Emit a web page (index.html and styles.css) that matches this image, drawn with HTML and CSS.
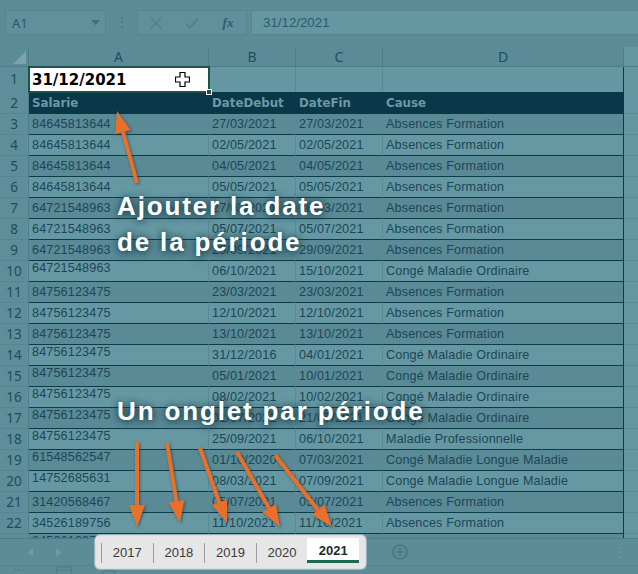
FILE: index.html
```html
<!DOCTYPE html>
<html lang="fr">
<head>
<meta charset="utf-8">
<title>Excel</title>
<link rel="stylesheet" href="styles.css">
</head>
<body>
<div class="app">
  <div class="toolbar">
    <div class="namebox"><span>A1</span><svg class="caret" width="9" height="5" viewBox="0 0 9 5"><path d="M0 0H9L4.5 5Z"/></svg></div>
    <div class="grip">⋮</div>
    <div class="fbtns">
      <span class="fb"><svg width="12" height="12" viewBox="0 0 12 12"><path d="M1 1L11 11M11 1L1 11"/></svg></span>
      <span class="fb"><svg width="14" height="12" viewBox="0 0 14 12"><path d="M1 6.5L5 10.5L13 1.5"/></svg></span>
      <span class="fb fx">fx</span>
    </div>
    <div class="formula">31/12/2021</div>
  </div>

  <div class="sheet">
    <div class="row colhdr">
      <div class="corner"><svg width="13" height="13" viewBox="0 0 13 13"><path d="M13 0V13H0Z"/></svg></div>
      <div>A</div><div>B</div><div>C</div><div>D</div><div class="e"></div>
    </div>
    <div class="row r1">
      <div class="rh">1</div>
      <div class="a1"><span>31/12/2021</span><svg class="cursor" width="15" height="15" viewBox="0 0 15 15"><path d="M5 .5H10V5H14.5V10H10V14.5H5V10H.5V5H5Z"/></svg><i class="handle"></i></div>
      <div class="c"></div><div class="c"></div><div class="c last"></div><div class="e"></div>
    </div>
    <div class="row thead">
      <div class="rh">2</div>
      <div>Salarie</div><div>DateDebut</div><div>DateFin</div><div>Cause</div><div class="e"></div>
    </div>
    <div class="row d dk"><div class="rh">3</div><div>84645813644</div><div>27/03/2021</div><div>27/03/2021</div><div>Absences Formation</div><div class="e"></div></div>
    <div class="row d"><div class="rh">4</div><div>84645813644</div><div>02/05/2021</div><div>02/05/2021</div><div>Absences Formation</div><div class="e"></div></div>
    <div class="row d dk"><div class="rh">5</div><div>84645813644</div><div>04/05/2021</div><div>04/05/2021</div><div>Absences Formation</div><div class="e"></div></div>
    <div class="row d"><div class="rh">6</div><div>84645813644</div><div>05/05/2021</div><div>05/05/2021</div><div>Absences Formation</div><div class="e"></div></div>
    <div class="row d dk"><div class="rh">7</div><div>64721548963</div><div>27/03/2021</div><div>28/03/2021</div><div>Absences Formation</div><div class="e"></div></div>
    <div class="row d"><div class="rh">8</div><div>64721548963</div><div>05/07/2021</div><div>05/07/2021</div><div>Absences Formation</div><div class="e"></div></div>
    <div class="row d dk"><div class="rh">9</div><div>64721548963</div><div>29/09/2021</div><div>29/09/2021</div><div>Absences Formation</div><div class="e"></div></div>
    <div class="row d hi"><div class="rh">10</div><div>64721548963</div><div>06/10/2021</div><div>15/10/2021</div><div>Congé Maladie Ordinaire</div><div class="e"></div></div>
    <div class="row d dk"><div class="rh">11</div><div>84756123475</div><div>23/03/2021</div><div>23/03/2021</div><div>Absences Formation</div><div class="e"></div></div>
    <div class="row d"><div class="rh">12</div><div>84756123475</div><div>12/10/2021</div><div>12/10/2021</div><div>Absences Formation</div><div class="e"></div></div>
    <div class="row d dk"><div class="rh">13</div><div>84756123475</div><div>13/10/2021</div><div>13/10/2021</div><div>Absences Formation</div><div class="e"></div></div>
    <div class="row d hi"><div class="rh">14</div><div>84756123475</div><div>31/12/2016</div><div>04/01/2021</div><div>Congé Maladie Ordinaire</div><div class="e"></div></div>
    <div class="row d dk hi"><div class="rh">15</div><div>84756123475</div><div>05/01/2021</div><div>10/01/2021</div><div>Congé Maladie Ordinaire</div><div class="e"></div></div>
    <div class="row d hi"><div class="rh">16</div><div>84756123475</div><div>08/02/2021</div><div>10/02/2021</div><div>Congé Maladie Ordinaire</div><div class="e"></div></div>
    <div class="row d dk hi"><div class="rh">17</div><div>84756123475</div><div>01/07/2021</div><div>21/07/2021</div><div>Congé Maladie Ordinaire</div><div class="e"></div></div>
    <div class="row d hi"><div class="rh">18</div><div>84756123475</div><div>25/09/2021</div><div>06/10/2021</div><div>Maladie Professionnelle</div><div class="e"></div></div>
    <div class="row d dk hi"><div class="rh">19</div><div>61548562547</div><div>01/10/2020</div><div>07/03/2021</div><div>Congé Maladie Longue Maladie</div><div class="e"></div></div>
    <div class="row d hi"><div class="rh">20</div><div>14752685631</div><div>08/03/2021</div><div>07/09/2021</div><div>Congé Maladie Longue Maladie</div><div class="e"></div></div>
    <div class="row d dk"><div class="rh">21</div><div>31420568467</div><div>05/07/2021</div><div>05/07/2021</div><div>Absences Formation</div><div class="e"></div></div>
    <div class="row d"><div class="rh">22</div><div>34526189756</div><div>11/10/2021</div><div>11/10/2021</div><div>Absences Formation</div><div class="e"></div></div>
    <div class="row d dk hi"><div class="rh">23</div><div>34526189756</div><div>12/10/2021</div><div>12/10/2021</div><div>Absences Formation</div><div class="e"></div></div>
  </div>

  <div class="tabbar">
    <div class="nav">
      <svg width="6" height="9" viewBox="0 0 6 9"><path d="M6 0V9L0 4.5Z"/></svg>
      <svg width="6" height="9" viewBox="0 0 6 9"><path d="M0 0V9L6 4.5Z"/></svg>
    </div>
    <div class="tabs">
      <div class="tab">2017</div>
      <div class="tab">2018</div>
      <div class="tab">2019</div>
      <div class="tab">2020</div>
      <div class="tab active">2021</div>
    </div>
    <svg class="addsheet" width="16" height="16" viewBox="0 0 16 16"><circle cx="8" cy="8" r="7"/><path d="M8 4.5V11.5M4.5 8H11.5"/></svg>
    <div class="vdots">⋮</div>
  </div>
  <div class="statusbar">
    <svg width="14" height="8" viewBox="0 0 14 8"><path d="M2 4h2M6 4h2M10 4h2"/></svg>
    <svg width="16" height="8" viewBox="0 0 16 8"><path d="M1 1H15V8M1 1V8M1 4H15"/></svg>
    <svg width="14" height="8" viewBox="0 0 14 8"><path d="M5 1H9V5H5ZM1 8V5H13V8"/></svg>
  </div>

  <div class="note note1">Ajouter la date<br>de la période</div>
  <div class="note note2">Un onglet par période</div>

  <svg class="arrows" width="638" height="574" viewBox="0 0 638 574">
    <g class="arr">
      <line x1="137" y1="183" x2="123" y2="132"/>
      <polygon points="117,111 130.6,130.1 115.2,134.3"/>
      <line x1="137" y1="442" x2="137" y2="506"/>
      <polygon points="137,527 129,505 145,505"/>
      <line x1="167" y1="443" x2="176.5" y2="502"/>
      <polygon points="180,523 168.6,502.6 184.4,500"/>
      <line x1="200" y1="448" x2="219.5" y2="503"/>
      <polygon points="227,523 212,505 227.1,499.6"/>
      <line x1="237" y1="452" x2="269" y2="508"/>
      <polygon points="280,527 262.1,511.9 276,503.9"/>
      <line x1="275" y1="455" x2="318" y2="510"/>
      <polygon points="332,527 312,514.7 324.6,504.7"/>
    </g>
  </svg>
</div>
</body>
</html>
```

FILE: styles.css
```css
html, body {
  margin: 0;
  padding: 0;
}
body {
  width: 638px;
  height: 574px;
  overflow: hidden;
  background: #6497a2;
  font-family: "Liberation Sans", Arial, sans-serif;
}
.app {
  position: relative;
  width: 638px;
  height: 574px;
  display: flex;
  flex-direction: column;
}

/* ---------- toolbar ---------- */
.toolbar {
  height: 47px;
  flex: none;
  box-sizing: border-box;
  padding-top: 10px;
  display: flex;
  align-items: flex-start;
  background: #5c8c98;
}
.namebox {
  margin-left: 5px;
  width: 101px;
  height: 25px;
  box-sizing: border-box;
  border: 1px solid #55858f;
  background: #5f909c;
  display: flex;
  align-items: center;
  justify-content: space-between;
  padding: 0 5px 0 6px;
  color: #2b5a68;
  font-family: "Noto Sans", sans-serif;
  font-size: 13px;
}
.caret { fill: #3f6f7b; }
.grip {
  width: 31px;
  text-align: center;
  color: #4a7a86;
  font-size: 14px;
  line-height: 25px;
}
.fbtns {
  width: 110px;
  height: 25px;
  box-sizing: border-box;
  border: 1px solid #55858f;
  background: #5f909c;
  display: flex;
}
.fb {
  width: 36px;
  display: flex;
  align-items: center;
  justify-content: center;
}
.fb svg path {
  fill: none;
  stroke: #4f7f8b;
  stroke-width: 1.6;
}
.fx {
  font-family: "Liberation Serif", serif;
  font-style: italic;
  font-weight: bold;
  font-size: 13px;
  color: #2e5e6a;
}
.formula {
  margin-left: 4px;
  flex: 1;
  height: 25px;
  box-sizing: border-box;
  border: 1px solid #55858f;
  border-right: 0;
  background: #6497a2;
  padding-left: 11px;
  font-size: 13.3px;
  line-height: 23px;
  color: #2d5b69;
}

/* ---------- sheet ---------- */
.sheet {
  height: 491px;
  overflow: hidden;
  flex: none;
}
.row {
  display: grid;
  grid-template-columns: 29px 180px 87px 87px 241px 14px;
  height: 21px;
}
.row > div {
  box-sizing: border-box;
  white-space: nowrap;
  overflow: hidden;
}
.colhdr {
  height: 20px;
  background: #5b8b97;
}
.colhdr > div {
  border-right: 1px solid #4d7d89;
  border-bottom: 1px solid #4d7d89;
  text-align: center;
  font-family: "Noto Sans", sans-serif;
  font-size: 14px;
  line-height: 20px;
  color: #1f4f5f;
}
.colhdr > div.e { border-right: 0; }
.corner {
  display: flex;
  align-items: flex-end;
  justify-content: flex-end;
  padding: 0 2px 2px 0;
}
.corner path { fill: #7aa3ad; }

.rh {
  background: #5d8e9a;
  border-right: 1px solid #4e7e8a;
  border-bottom: 1px solid #56868f;
  text-align: center;
  font-family: "Noto Sans", sans-serif;
  font-size: 13.5px;
  line-height: 21px;
  color: #1f4d5d;
}
.e {
  background: #6497a2;
  border-bottom: 1px solid #5a8a95;
}

.r1 { height: 25px; }
.r1 .rh { line-height: 25px; border-bottom: 0; }
.r1 .c {
  background: #6497a2;
  border-right: 1px solid #5a8a96;
}
.r1 .c.last { border-right: 1px solid #0c3b4a; }
.r1 .e { border-bottom: 0; }
.a1 {
  position: relative;
  background: #ffffff;
  outline: 2px solid #1b5548;
  outline-offset: -1px;
  display: flex;
  align-items: center;
  padding-left: 3px;
  font-family: "DejaVu Sans", sans-serif;
  font-weight: bold;
  font-size: 15px;
  color: #000;
  overflow: visible !important;
}
.cursor {
  margin-left: auto;
  margin-right: 19px;
}
.cursor path {
  fill: #fff;
  stroke: #000;
  stroke-width: 1.2;
}
.handle {
  position: absolute;
  right: -3px;
  bottom: -3px;
  width: 6px;
  height: 6px;
  background: #1b5548;
  border: 1px solid #ffffff;
  box-sizing: border-box;
}

.thead { height: 22px; }
.thead > div {
  background: #0b3848;
  padding-left: 3px;
  font-family: "DejaVu Sans", sans-serif;
  font-weight: bold;
  font-size: 11.8px;
  line-height: 22px;
  color: #6b99a5;
}
.thead > .rh {
  background: #5d8e9a;
  padding-left: 0;
  font-family: "Noto Sans", sans-serif;
  font-weight: normal;
  font-size: 13.5px;
  color: #1f4d5d;
  line-height: 22px;
}
.thead > .e { background: #6497a2; }

.d > div {
  background: #6598a3;
  padding-left: 3px;
  font-size: 12.6px;
  letter-spacing: 0.15px;
  line-height: 21px;
  color: #1c4656;
  border-bottom: 1px solid #0c3b4a;
}
.d > div:nth-child(2),
.d > div:nth-child(3),
.d > div:nth-child(4) {
  border-right: 1px solid #5a8a96;
}
.d > div:nth-child(5) { border-right: 1px solid #0c3b4a; }
.d.dk > div { background: #5a8a96; }
.d > .rh,
.d.dk > .rh {
  background: #5d8e9a;
  padding-left: 0;
  font-family: "Noto Sans", sans-serif;
  font-size: 13.5px;
  letter-spacing: 0;
  line-height: 21px;
  color: #1f4d5d;
  border-bottom: 1px solid #56868f;
  border-right: 1px solid #4e7e8a;
}
.d > .e,
.d.dk > .e {
  background: #6497a2;
  border-bottom: 1px solid #5a8a95;
}
.d.hi > div:nth-child(2) { line-height: 15px; }

/* ---------- sheet tabs ---------- */
.tabbar {
  height: 27px;
  box-sizing: border-box;
  border-top: 1px solid #4d7d89;
  background: #5c8c98;
  display: flex;
  align-items: center;
  flex: none;
}
.nav {
  width: 95px;
  display: flex;
  gap: 23px;
  padding-left: 27px;
  box-sizing: border-box;
}
.nav path { fill: #6c9aa5; }
.tabs {
  position: relative;
  z-index: 1;
  width: 271px;
  height: 34px;
  flex: none;
  box-sizing: border-box;
  border: 1px dotted #d4d4d4;
  border-radius: 5px;
  background: #e6e6e6;
  display: flex;
  align-items: flex-end;
  padding: 0 6px 5px 5px;
  box-shadow: 0 0 0 1px rgba(255,255,255,0.35);
}
.tab {
  width: 52px;
  height: 20px;
  box-sizing: border-box;
  border-left: 1px solid #9c9c9c;
  text-align: center;
  font-size: 13px;
  line-height: 20px;
  color: #3a3a3a;
}
.tab.active {
  height: 25px;
  border-left: 0;
  background: #ffffff;
  border-bottom: 3px solid #1f6653;
  font-weight: bold;
  color: #1b2b2b;
  padding-top: 3px;
  line-height: 19px;
}
.addsheet {
  margin-left: 26px;
}
.addsheet circle,
.addsheet path {
  fill: none;
  stroke: #3f6f7b;
  stroke-width: 1.2;
}
.vdots {
  margin-left: auto;
  margin-right: 11px;
  color: #6c9aa5;
  font-size: 14px;
}
.statusbar {
  flex: 1;
  border-top: 1px solid #52828e;
  background: #5c8c98;
  display: flex;
  align-items: flex-end;
  gap: 30px;
  padding-left: 12px;
}
.statusbar path {
  fill: none;
  stroke: #4d7d89;
  stroke-width: 1.2;
}

/* ---------- annotations ---------- */
.note {
  position: absolute;
  left: 117px;
  font-family: "Liberation Sans", Arial, sans-serif;
  font-weight: bold;
  font-size: 26px;
  line-height: 36px;
  letter-spacing: 1.85px;
  color: #ffffff;
  white-space: nowrap;
  text-shadow: 0 0 6px rgba(25, 65, 75, 0.9), 1px 2px 8px rgba(25, 65, 75, 0.8);
}
.note1 { top: 188px; }
.note2 { top: 393px; }
.arrows {
  position: absolute;
  left: 0;
  top: 0;
  pointer-events: none;
}
.arr {
  filter: drop-shadow(1px 1px 1.5px rgba(20, 50, 60, 0.6));
}
.arr line {
  stroke: #e8702b;
  stroke-width: 4;
}
.arr polygon {
  fill: #e8702b;
}
```
